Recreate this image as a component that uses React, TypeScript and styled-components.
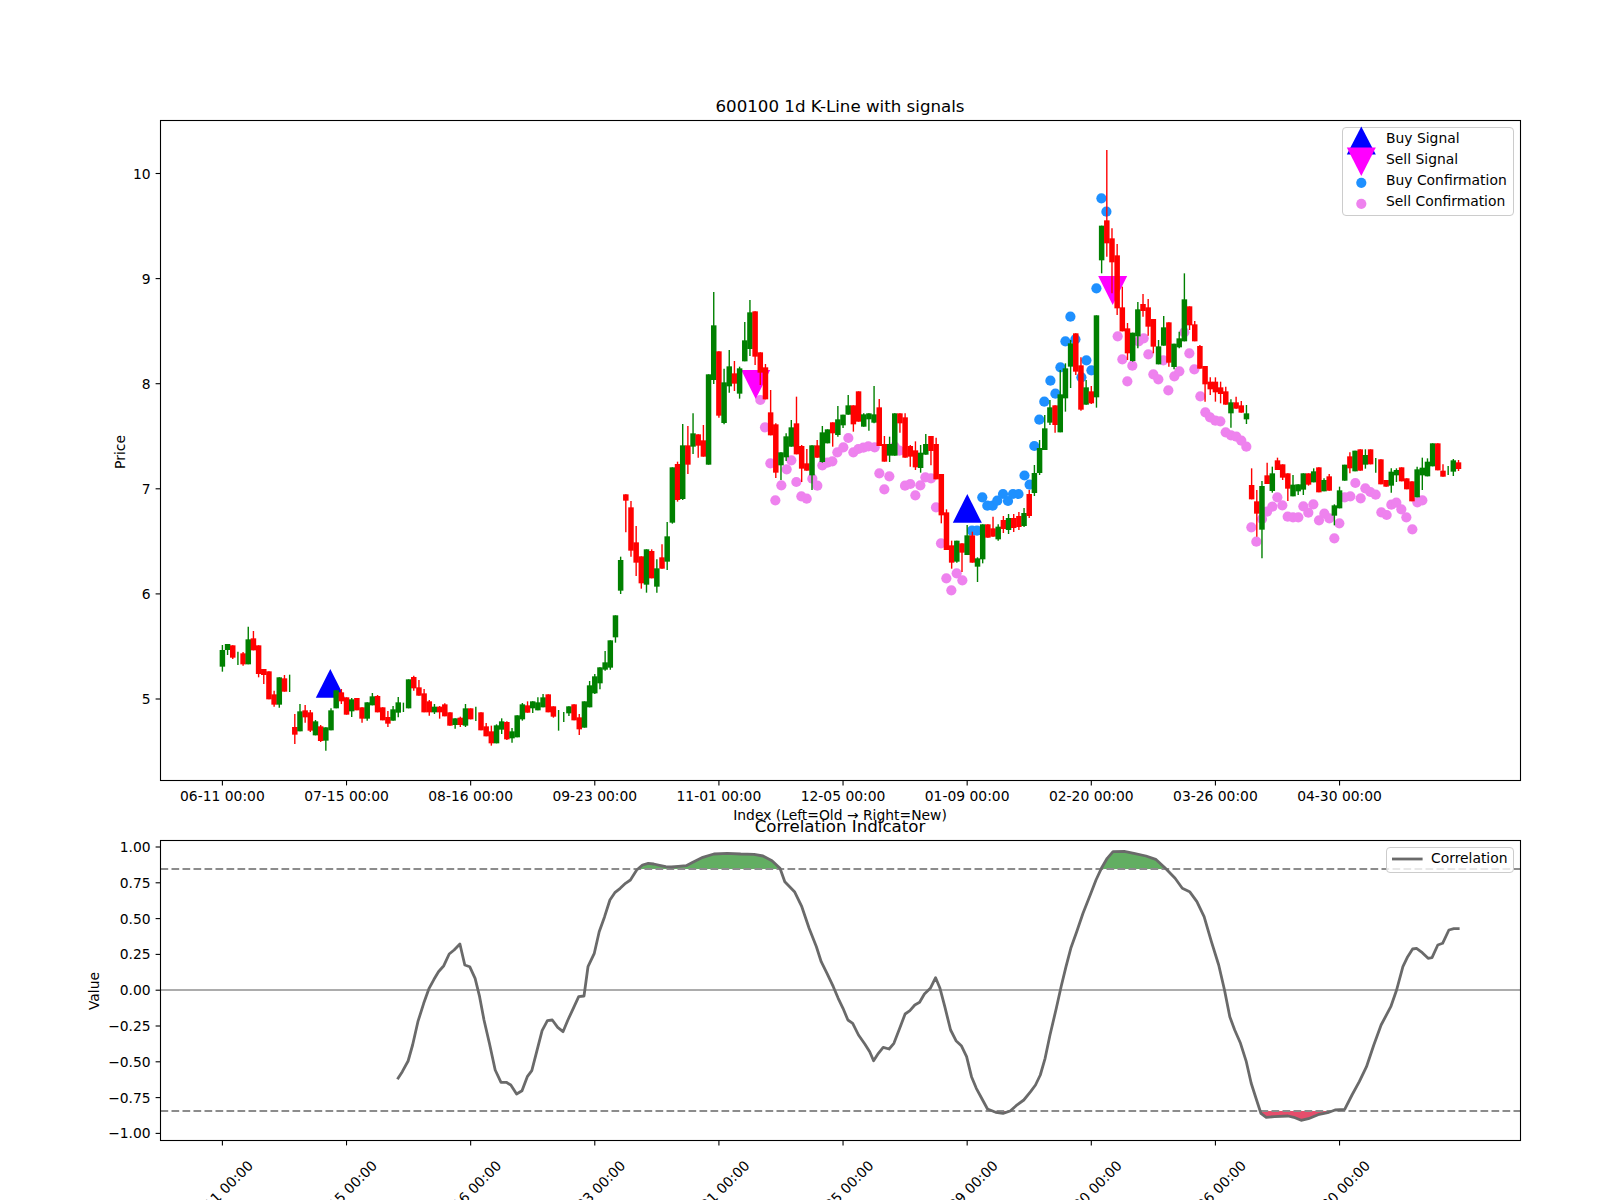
import React from "react";
import styled, { createGlobalStyle } from "styled-components";

const GlobalStyle = createGlobalStyle`
  html, body { margin: 0; padding: 0; background: #ffffff; }
  body { font-family: "DejaVu Sans", "Liberation Sans", sans-serif; }
`;

const Figure = styled.div`
  width: 1600px;
  height: 1200px;
  overflow: hidden;
  display: flex;
  flex-direction: column;
  background: #ffffff;
  color: #000000;
`;
const PanelTitle = styled.div<{ $top: number }>`
  margin: ${(p) => p.$top}px 0 0 160px;
  width: 1360px;
  height: 23px;
  line-height: 24px;
  text-align: center;
  font-size: 16.67px;
  position: relative;
  z-index: 1;
`;
const Plot = styled.div<{ $height: number }>`
  position: relative;
  margin-left: 160px;
  width: 1360px;
  height: ${(p) => p.$height}px;
  flex: none;
`;
const PlotSvg = styled.svg`
  display: block;
  width: 100%;
  height: 100%;
  overflow: visible;
`;
const AxisText = styled.text`
  font-family: "DejaVu Sans", sans-serif;
  font-size: 13.89px;
  fill: #000000;
`;
const Legend = styled.div<{ $width: number }>`
  position: absolute;
  top: 9px;
  right: 6px;
  box-sizing: border-box;
  width: ${(p) => p.$width}px;
  padding: 0 0 3px 5px;
  background: rgba(255, 255, 255, 0.8);
  border: 1px solid #cccccc;
  border-radius: 4px;
`;
const LegendRow = styled.div`
  display: flex;
  align-items: center;
  height: 20.9px;
  font-size: 13.89px;
  white-space: nowrap;
`;
const LegendMark = styled.svg<{ $width: number }>`
  flex: none;
  width: ${(p) => p.$width}px;
  height: 21px;
  overflow: visible;
`;

const G = 1;
const R = 0;
type Candle = { t: number; b: number; wt: number; wb: number; c: number };
const seg = (y0: number, rows: number[][], k = 3): Candle[] =>
  rows.map(([t, b, wt, wb, c]) => ({ t: y0 + t / k, b: y0 + b / k, wt: y0 + wt / k, wb: y0 + wb / k, c }));

const candles: Candle[] = [
  ...seg(600, [
    [150, 200, 135, 215, G], [132, 150, 132, 165, G], [136, 173, 136, 177, R], [175, 175, 155, 195, G],
    [160, 193, 156, 197, R], [118, 193, 80, 193, G], [115, 151, 93, 151, R], [136, 222, 136, 232, R],
    [207, 225, 207, 252, R], [214, 298, 214, 298, R], [283, 314, 272, 320, R], [232, 314, 232, 323, G],
    [235, 275, 225, 275, R], [250, 250, 224, 276, G], [381, 404, 342, 432, R], [334, 394, 312, 394, G],
    [331, 352, 315, 368, R], [337, 392, 330, 396, R], [364, 406, 360, 406, G], [379, 423, 375, 426, R],
    [382, 422, 382, 452, G], [331, 391, 325, 391, G], [271, 325, 271, 325, G], [277, 304, 267, 312, R],
    [292, 344, 292, 344, R], [298, 334, 294, 351, G], [294, 331, 294, 331, R], [322, 356, 322, 368, R],
    [307, 356, 307, 362, G], [289, 316, 279, 316, G], [288, 337, 285, 337, R], [322, 361, 322, 361, R],
    [351, 371, 333, 381, R], [328, 362, 318, 362, G], [307, 338, 291, 352, G],
    [322, 322, 308, 336, G], [238, 325, 238, 325, G], [231, 265, 227, 272, R], [262, 287, 240, 287, R],
    [280, 337, 267, 337, R], [304, 337, 300, 347, R], [320, 337, 312, 342, G], [320, 337, 318, 356, R],
    [313, 349, 310, 349, R], [337, 377, 337, 377, R], [355, 375, 355, 386, G], [353, 375, 350, 381, R],
    [325, 377, 312, 381, G], [325, 358, 325, 358, R], [340, 340, 320, 363, G], [337, 391, 337, 391, R],
    [379, 409, 369, 409, R], [394, 430, 377, 437, R], [376, 430, 373, 430, G], [364, 389, 355, 402, G],
    [366, 418, 364, 420, R], [394, 415, 384, 428, G], [346, 412, 346, 412, G], [313, 358, 309, 362, G],
    [316, 338, 304, 338, R], [304, 325, 304, 339, G], [307, 331, 292, 331, G], [292, 322, 282, 322, G],
    [283, 337, 283, 337, R], [319, 350, 319, 353, R], [360, 360, 330, 392, G], [350, 350, 336, 366, G],
    [319, 340, 319, 348, G], [313, 361, 313, 361, R], [352, 388, 342, 405, R], [304, 383, 304, 383, G],
    [256, 322, 243, 322, G], [229, 280, 222, 282, G], [202, 250, 202, 268, G], [187, 209, 153, 212, G],
    [121, 203, 121, 209, G], [46, 112, 46, 128, G],
  ]),
  ...seg(280, [
    [840, 932, 830, 942, G], [643, 662, 643, 757, R], [682, 812, 663, 830, R], [787, 848, 738, 888, R],
    [829, 910, 829, 926, R], [808, 914, 808, 938, G], [813, 895, 808, 895, R], [865, 920, 838, 938, G],
    [832, 866, 793, 866, R], [769, 845, 726, 870, G], [562, 728, 562, 731, G], [552, 660, 545, 665, R],
    [496, 657, 432, 660, G], [496, 554, 438, 582, R], [460, 500, 400, 522, G], [463, 497, 463, 533, R],
    [481, 530, 435, 530, R], [283, 554, 283, 554, G], [136, 300, 36, 312, G], [214, 407, 214, 413, R],
    [307, 429, 266, 433, G], [259, 319, 210, 338, G], [280, 311, 243, 333, R], [265, 341, 260, 356, G],
    [181, 244, 126, 244, G], [97, 207, 60, 228, G], [94, 230, 94, 255, R], [217, 278, 217, 315, R],
    [262, 358, 252, 358, R], [397, 466, 330, 466, R], [433, 578, 430, 594, R], [517, 556, 517, 600, G],
    [469, 532, 460, 543, G], [442, 500, 420, 500, G], [430, 523, 350, 523, R], [498, 566, 495, 606, R],
    [550, 572, 507, 572, R], [496, 586, 496, 630, G], [496, 533, 480, 533, R], [457, 546, 438, 548, G],
    [448, 490, 448, 490, G], [427, 460, 427, 500, R], [418, 465, 378, 470, G], [404, 436, 404, 444, G],
    [376, 404, 345, 404, G], [376, 433, 376, 455, R], [334, 425, 334, 425, R], [403, 440, 400, 440, G],
    [400, 418, 400, 452, G], [403, 428, 318, 430, G], [382, 498, 357, 498, R], [492, 545, 468, 545, R],
    [492, 527, 470, 546, G], [400, 527, 400, 527, G], [400, 430, 400, 458, R], [412, 533, 400, 533, R],
    [498, 530, 495, 560, R], [511, 562, 484, 570, R], [518, 564, 495, 578, G], [492, 524, 462, 524, G],
    [468, 513, 468, 556, R], [492, 598, 473, 598, R], [582, 706, 582, 730, R], [697, 810, 688, 810, R],
    [796, 848, 782, 866, R], [782, 845, 782, 848, G], [790, 818, 790, 876, R], [766, 825, 735, 825, G],
    [766, 848, 755, 848, R], [835, 860, 832, 906, G], [733, 838, 733, 850, G], [733, 773, 733, 773, R],
    [745, 770, 710, 770, R], [740, 778, 733, 782, G],
  ]),
  ...seg(0, [
    [520, 529, 516, 533, R], [518, 530, 514, 534, G], [518, 528, 514, 532, R], [516, 527, 512, 530, R],
    [513, 526, 508, 527, G], [494, 516, 490, 518, R], [473, 493, 465, 496, G], [448, 473, 440, 475, G],
  ], 1),
  ...seg(140, [
    [865, 930, 825, 930, G], [802, 848, 780, 855, G], [796, 855, 796, 878, R], [763, 877, 690, 877, G],
    [685, 775, 670, 815, G], [610, 680, 600, 744, G], [580, 695, 580, 705, R], [676, 809, 652, 812, R],
    [742, 794, 720, 794, G], [754, 790, 738, 792, R], [526, 772, 526, 803, G], [257, 361, 257, 400, G],
    [241, 310, 30, 350, R], [295, 367, 265, 460, R], [346, 505, 312, 525, R], [502, 574, 440, 574, R],
    [565, 640, 549, 660, R], [578, 663, 578, 665, G], [508, 589, 486, 625, G], [492, 513, 462, 530, R],
    [502, 560, 477, 587, R], [537, 620, 537, 640, R], [619, 673, 600, 673, G], [562, 617, 528, 617, G],
    [547, 668, 547, 680, R], [611, 681, 611, 688, G], [595, 622, 575, 625, G], [478, 604, 400, 604, G],
    [499, 556, 499, 570, R], [553, 604, 543, 604, R], [618, 686, 615, 686, R], [678, 733, 678, 785, R],
    [725, 748, 712, 765, R], [725, 757, 712, 785, R], [742, 762, 725, 790, R], [754, 794, 740, 794, R],
    [787, 820, 778, 863, G], [787, 806, 770, 806, R], [796, 818, 783, 818, R], [820, 838, 795, 852, G],
  ]),
  ...seg(420, [
    [195, 238, 145, 238, R], [244, 281, 210, 350, R], [198, 329, 183, 415, G], [166, 192, 128, 192, R],
    [160, 213, 140, 218, G], [121, 150, 113, 150, R], [133, 173, 133, 180, R], [160, 206, 160, 243, R],
    [194, 229, 165, 229, G], [193, 214, 193, 225, G], [160, 209, 160, 225, G], [160, 194, 160, 197, R],
    [154, 187, 145, 187, G], [142, 217, 142, 217, R], [180, 214, 175, 214, G], [169, 212, 162, 212, R],
    [256, 287, 253, 316, G], [211, 265, 200, 265, G], [134, 182, 134, 182, G], [109, 145, 97, 160, R],
    [92, 154, 92, 154, G], [88, 152, 88, 152, R], [105, 134, 88, 146, G], [88, 133, 88, 133, R],
    [136, 136, 114, 158, G], [118, 193, 118, 193, R], [180, 200, 180, 200, R], [155, 197, 145, 218, G],
    [150, 166, 145, 186, G], [142, 184, 142, 184, R], [175, 208, 175, 208, R], [184, 244, 184, 244, R],
    [148, 232, 140, 232, G], [143, 166, 113, 210, G], [125, 169, 115, 169, G], [70, 139, 70, 139, G],
    [70, 151, 70, 151, R], [152, 170, 133, 170, R], [150, 150, 138, 165, G], [121, 155, 117, 168, G],
    [127, 147, 120, 153, R],
  ]),
];

const barX = (i: number) => 222.4 + 5.172 * i;
const TICK_X = Array.from({ length: 10 }, (_, k) => barX(24 * k));
const X_LABELS = ["06-11", "07-15", "08-16", "09-23", "11-01", "12-05", "01-09", "02-20", "03-26", "04-30"].map(
  (d) => `${d} 00:00`
);

type Pt = [number, number];
const zoomPts = (x0: number, y0: number, kx: number, k: number, raw: number[][]): Pt[] =>
  raw.map(([x, y]) => [x0 + x / kx, y0 + y / k]);

const pinkDots: Pt[] = [
  ...zoomPts(600, 280, 3, 3, [
    [481, 360], [495, 442], [511, 550], [526, 661], [544, 616], [560, 568], [574, 541], [589, 606], [604, 649],
    [620, 656], [637, 596], [652, 617], [667, 556], [682, 548], [697, 544], [712, 517], [730, 502], [745, 474],
    [760, 517], [775, 507], [790, 503], [805, 499], [824, 502], [838, 580], [853, 628], [868, 589], [884, 500],
    [898, 512], [915, 617], [931, 612], [946, 646], [961, 616], [976, 592], [993, 595], [1008, 682], [1023, 790],
    [1039, 895], [1054, 931], [1070, 880], [1087, 901],
  ]),
  ...zoomPts(1040, 140, 3, 3, [
    [233, 589], [247, 658], [262, 724], [277, 677], [296, 604], [311, 595], [325, 643], [340, 703], [355, 718],
    [370, 661], [385, 751], [403, 709], [418, 694], [433, 577], [448, 640], [463, 688], [481, 769], [496, 817],
    [510, 832], [526, 842], [541, 844],
  ]),
  ...zoomPts(1050, 400, 3, 3, [[527, 97], [543, 106], [559, 110], [574, 122], [589, 140]]),
  ...zoomPts(1220, 420, 3, 3, [
    [94, 322], [109, 365], [126, 297], [141, 275], [157, 260], [172, 232], [187, 256], [203, 290], [219, 292],
    [235, 292], [250, 259], [265, 278], [280, 253], [297, 301], [313, 281], [328, 295], [343, 355], [358, 310],
    [374, 232], [391, 229], [406, 189], [422, 235], [436, 205], [451, 216], [467, 224], [484, 277], [500, 285],
    [514, 254], [529, 248], [544, 268], [559, 292], [577, 328], [592, 247], [607, 241],
  ]),
];

const blueDots: Pt[] = [
  [972, 530.7], [977, 530.7], [982.3, 497.3], [987.3, 505.7], [992.7, 505.7], [997.3, 500.7], [1003, 494],
  [1008, 501], [1013, 494], [1018.5, 494], [1024.5, 475.5], [1029.6, 484.7], [1034.3, 446], [1039.3, 419.7],
  [1044.3, 401.7], [1050.4, 380.7], [1055.4, 393.7], [1060.4, 367.3], [1065.4, 341.3], [1070.4, 316.7],
  [1075.4, 339.3], [1081.4, 377.3], [1086.4, 360.3], [1091.4, 370.3], [1096.4, 288.3], [1101.4, 198.3],
  [1106.4, 211.7],
];

const triUp = (cx: number, apex: number, base: number, half = 14.5) =>
  `${cx},${apex} ${cx + half},${base} ${cx - half},${base}`;

const corr: Pt[] = [
  ...zoomPts(80, 820, 2.24, 3, [
    [711, 778], [722, 755], [735, 723], [745, 675], [757, 605], [770, 550], [782, 505], [793, 478], [803, 455],
    [815, 437], [827, 402], [838, 390], [851, 372], [862, 435], [873, 440], [885, 475], [895, 530], [905, 600],
    [917, 670], [930, 750], [943, 787], [955, 787], [965, 795], [978, 822], [990, 812], [1002, 770], [1012, 752],
    [1023, 695], [1035, 632], [1047, 602], [1058, 600], [1070, 622], [1082, 635], [1093, 600], [1105, 565],
    [1117, 530], [1129, 528], [1138, 440], [1152, 400], [1163, 335], [1175, 290], [1187, 240], [1198, 218],
    [1210, 205], [1222, 190], [1233, 180], [1247, 150], [1260, 135], [1273, 130], [1285, 132], [1298, 136],
    [1312, 140], [1325, 141], [1340, 139], [1358, 137], [1375, 125], [1395, 112], [1420, 102], [1450, 100],
    [1480, 102], [1510, 103], [1530, 108], [1550, 122],
  ]),
  ...zoomPts(780, 820, 2.063, 3, [
    [0, 145], [10, 185], [30, 215], [45, 260], [60, 325], [75, 380], [85, 425], [97, 460], [110, 500], [120, 535],
    [130, 565], [140, 600], [150, 610], [162, 645], [175, 672], [185, 695], [193, 722], [203, 700], [213, 682],
    [225, 687], [235, 670], [247, 625], [258, 582], [268, 572], [278, 555], [288, 547], [298, 522], [310, 505],
    [321, 473], [330, 505], [340, 560], [352, 630], [363, 662], [374, 677], [385, 710], [395, 770], [405, 805],
    [418, 840], [428, 867], [445, 877], [460, 880], [475, 873], [487, 857], [503, 840], [517, 815], [527, 795],
    [537, 765], [547, 715], [557, 645], [570, 565], [580, 500], [590, 440], [600, 385], [612, 335], [625, 280],
    [640, 225], [652, 180], [663, 145], [675, 115], [687, 95], [710, 94], [730, 100], [755, 108], [775, 118],
    [795, 145], [815, 175], [830, 205], [845, 215], [860, 245], [875, 290], [890, 365], [905, 435], [917, 510],
    [928, 590], [938, 630], [950, 670], [962, 725], [972, 790], [982, 835], [992, 880], [1003, 892], [1020, 890],
    [1048, 888], [1060, 892], [1075, 901], [1090, 896], [1110, 884], [1130, 878], [1145, 870], [1165, 868],
    [1180, 825], [1195, 785], [1210, 740], [1225, 675], [1240, 615], [1260, 560], [1272, 510], [1285, 440],
    [1295, 410], [1305, 387], [1313, 385], [1325, 398], [1337, 415], [1345, 413], [1357, 375], [1367, 370],
    [1380, 330], [1390, 326], [1402, 326],
  ]),
];

const corrLine = corr.map(([x, y]) => `${x.toFixed(1)},${y.toFixed(1)}`).join(" ");
const firstX = corr[0][0];
const lastX = corr[corr.length - 1][0];
const UPPER = 869;
const LOWER = 1111;
const areaPts = (yLevel: number) => `${firstX},${yLevel} ${corrLine} ${lastX},${yLevel}`;

const PRICE_TICKS = [5, 6, 7, 8, 9, 10];
const priceY = (v: number) => 699 - (v - 5) * 105.1;
const VALUE_TICKS = ["1.00", "0.75", "0.50", "0.25", "0.00", "−0.25", "−0.50", "−0.75", "−1.00"];
const valueY = (k: number) => 847 + k * 35.8;

const CandleMark = ({ c, x }: { c: Candle; x: number }) => {
  const col = c.c === G ? "#008000" : "#ff0000";
  return (
    <g>
      <line x1={x} x2={x} y1={c.wt} y2={c.wb} stroke={col} strokeWidth={1.4} />
      {c.b > c.t && <rect x={x - 2.75} y={c.t} width={5.5} height={c.b - c.t} fill={col} />}
    </g>
  );
};

export default function App() {
  return (
    <Figure>
      <GlobalStyle />
      <PanelTitle $top={95}>600100 1d K-Line with signals</PanelTitle>
      <Plot $height={662}>
        <PlotSvg viewBox="160 118 1360 662" preserveAspectRatio="none">
          {pinkDots.map(([x, y], i) => (
            <circle key={i} cx={x} cy={y} r={5.1} fill="#ee82ee" />
          ))}
          {blueDots.map(([x, y], i) => (
            <circle key={i} cx={x} cy={y} r={5.1} fill="#1e90ff" />
          ))}
          <polygon points={triUp(330.3, 669, 697.7)} fill="#0000ff" />
          <polygon points={triUp(967.3, 494, 522.7)} fill="#0000ff" />
          <polygon points={triUp(755.7, 399, 370)} fill="#ff00ff" />
          <polygon points={triUp(1112.7, 305, 276)} fill="#ff00ff" />
          {candles.map((c, i) => (
            <CandleMark key={i} c={c} x={barX(i)} />
          ))}
          <rect x={160.5} y={120.5} width={1360} height={660} fill="none" stroke="#000" strokeWidth={1.1} />
          {TICK_X.map((x, i) => (
            <g key={i}>
              <line x1={x} x2={x} y1={780.5} y2={785.4} stroke="#000" strokeWidth={1.1} />
              <AxisText x={x} y={800.5} textAnchor="middle">
                {X_LABELS[i]}
              </AxisText>
            </g>
          ))}
          {PRICE_TICKS.map((v) => (
            <g key={v}>
              <line x1={155.6} x2={160.5} y1={priceY(v)} y2={priceY(v)} stroke="#000" strokeWidth={1.1} />
              <AxisText x={150.7} y={priceY(v) + 5} textAnchor="end">
                {v}
              </AxisText>
            </g>
          ))}
          <AxisText transform="translate(124.5 452) rotate(-90)" textAnchor="middle">
            Price
          </AxisText>
          <AxisText x={840} y={820} textAnchor="middle">
            Index (Left=Old → Right=New)
          </AxisText>
        </PlotSvg>
        <Legend $width={172}>
          <LegendRow>
            <LegendMark $width={38} viewBox="0 0 38 21">
              <polygon points={triUp(13.3, -1.6, 26.6)} fill="#0000ff" />
            </LegendMark>
            Buy Signal
          </LegendRow>
          <LegendRow>
            <LegendMark $width={38} viewBox="0 0 38 21">
              <polygon points={triUp(13.3, 26.9, -1.4)} fill="#ff00ff" />
            </LegendMark>
            Sell Signal
          </LegendRow>
          <LegendRow>
            <LegendMark $width={38} viewBox="0 0 38 21">
              <circle cx={13.3} cy={12.8} r={5.1} fill="#1e90ff" />
            </LegendMark>
            Buy Confirmation
          </LegendRow>
          <LegendRow>
            <LegendMark $width={38} viewBox="0 0 38 21">
              <circle cx={13.3} cy={12.8} r={5.1} fill="#ee82ee" />
            </LegendMark>
            Sell Confirmation
          </LegendRow>
        </Legend>
      </Plot>
      <PanelTitle $top={35}>Correlation Indicator</PanelTitle>
      <Plot $height={302}>
        <PlotSvg viewBox="160 838 1360 302" preserveAspectRatio="none">
          <defs>
            <clipPath id="above">
              <rect x={160} y={838} width={1360} height={UPPER - 838} />
            </clipPath>
            <clipPath id="below">
              <rect x={160} y={LOWER} width={1360} height={1140 - LOWER} />
            </clipPath>
          </defs>
          <polygon points={areaPts(UPPER)} fill="#62ae62" clipPath="url(#above)" />
          <polygon points={areaPts(LOWER)} fill="#e64e6c" clipPath="url(#below)" />
          <line x1={160.5} x2={1520.5} y1={990} y2={990} stroke="#acacac" strokeWidth={2} />
          <line x1={160.5} x2={1520.5} y1={UPPER} y2={UPPER} stroke="#8c8c8c" strokeWidth={2} strokeDasharray="7.7 3.3" />
          <line x1={160.5} x2={1520.5} y1={LOWER} y2={LOWER} stroke="#8c8c8c" strokeWidth={2} strokeDasharray="7.7 3.3" />
          <polyline points={corrLine} fill="none" stroke="#6a6a6a" strokeWidth={2.8} strokeLinejoin="round" />
          <rect x={160.5} y={840.5} width={1360} height={300} fill="none" stroke="#000" strokeWidth={1.1} />
          {TICK_X.map((x, i) => (
            <g key={i}>
              <line x1={x} x2={x} y1={1140.5} y2={1145.4} stroke="#000" strokeWidth={1.1} />
              <AxisText transform={`translate(${x + 31.5} 1166.5) rotate(-45)`} textAnchor="end">
                {X_LABELS[i]}
              </AxisText>
            </g>
          ))}
          {VALUE_TICKS.map((v, k) => (
            <g key={v}>
              <line x1={155.6} x2={160.5} y1={valueY(k)} y2={valueY(k)} stroke="#000" strokeWidth={1.1} />
              <AxisText x={150.7} y={valueY(k) + 5} textAnchor="end">
                {v}
              </AxisText>
            </g>
          ))}
          <AxisText transform="translate(98.5 991) rotate(-90)" textAnchor="middle">
            Value
          </AxisText>
        </PlotSvg>
        <Legend $width={127.6}>
          <LegendRow>
            <LegendMark $width={38.6} viewBox="0 0 38.6 21">
              <line x1={0} x2={30.6} y1={11} y2={11} stroke="#6a6a6a" strokeWidth={2.8} />
            </LegendMark>
            Correlation
          </LegendRow>
        </Legend>
      </Plot>
    </Figure>
  );
}
